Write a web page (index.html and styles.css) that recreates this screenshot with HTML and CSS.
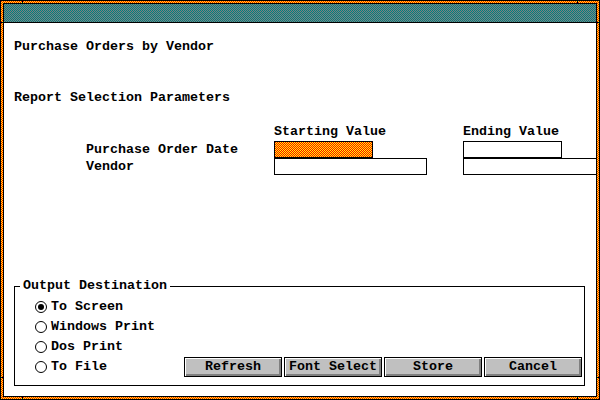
FILE: index.html
```html
<!DOCTYPE html>
<html>
<head>
<meta charset="utf-8">
<title>Purchase Orders by Vendor</title>
<link rel="stylesheet" href="styles.css">
</head>
<body>

<div class="window">
  <div class="client">
    <div class="titlebar"></div>

    <div class="body">
      <h1 class="caption">Purchase Orders by Vendor</h1>
      <h2 class="caption section">Report Selection Parameters</h2>

      <div class="params">
        <div></div>
        <div class="colhead">Starting Value</div>
        <div class="colhead">Ending Value</div>

        <div class="label">Purchase Order Date</div>
        <div><span class="field short hatched"></span></div>
        <div><span class="field short"></span></div>

        <div class="label">Vendor</div>
        <div><span class="field long"></span></div>
        <div><span class="field long"></span></div>
      </div>

      <fieldset class="group">
        <legend>Output Destination</legend>
        <div class="group-body">
          <div class="radios">
            <div class="radio-row"><span class="radio checked"></span>To Screen</div>
            <div class="radio-row"><span class="radio"></span>Windows Print</div>
            <div class="radio-row"><span class="radio"></span>Dos Print</div>
            <div class="radio-row"><span class="radio"></span>To File</div>
          </div>
          <div class="buttons">
            <button class="btn">Refresh</button>
            <button class="btn">Font Select</button>
            <button class="btn">Store</button>
            <button class="btn">Cancel</button>
          </div>
        </div>
      </fieldset>
    </div>
  </div>
</div>

</body>
</html>
```

FILE: styles.css
```css
html, body { margin: 0; padding: 0; background: #fff; }
body { font-family: "Liberation Mono", "DejaVu Sans Mono", monospace; font-weight: bold; font-size: 13.33px; line-height: 16px; color: #000; }

/* 1px dithers: base colour, screen with row stripes, difference with column stripes */

/* window sizing frame, red/yellow dither with corner notches */
.window { width: 600px; height: 400px; box-sizing: border-box; border: 1px solid #000; padding: 2px;
  background-color: #ff0000;
  background-image:
    linear-gradient(#000, #000), linear-gradient(#000, #000), linear-gradient(#000, #000), linear-gradient(#000, #000),
    linear-gradient(#000, #000), linear-gradient(#000, #000), linear-gradient(#000, #000), linear-gradient(#000, #000),
    linear-gradient(90deg, #00ff00 50%, #000 50%),
    linear-gradient(180deg, #00ff00 50%, #000 50%);
  background-size: 1px 2px, 1px 2px, 1px 2px, 1px 2px, 2px 1px, 2px 1px, 2px 1px, 2px 1px, 2px 2px, 2px 2px;
  background-position: 21px 0, 576px 0, 21px 396px, 576px 396px, 0 21px, 596px 21px, 0 376px, 596px 376px, 0 0, 0 0;
  background-repeat: no-repeat, no-repeat, no-repeat, no-repeat, no-repeat, no-repeat, no-repeat, no-repeat, repeat, repeat;
  background-blend-mode: normal, normal, normal, normal, normal, normal, normal, normal, difference, screen; }

.client { height: 100%; box-sizing: border-box; border: 1px solid #000; background: #fff; overflow: hidden; }

.titlebar { height: 18px; border-bottom: 1px solid #000;
  background-color: #008080;
  background-image: linear-gradient(90deg, #800000 50%, #000 50%), linear-gradient(180deg, #800000 50%, #000 50%);
  background-size: 2px 2px;
  background-blend-mode: difference, screen; }

.body { padding: 0 0 0 10px; }

.caption { font-size: 13.33px; font-weight: bold; line-height: 16px; margin: 16px 0 0; }
.section { margin-top: 35px; }

/* selection grid */
.params { display: grid; grid-template-columns: 188px 189px auto; grid-template-rows: 18px 17px 17px; margin: 17px 0 0 72px; }
.colhead { line-height: 16px; padding-top: 1px; }
.label { display: flex; align-items: center; }
.field { display: block; height: 17px; box-sizing: border-box; border: 1px solid #000; background: #fff; }
.field.short { width: 99px; }
.field.long { width: 153px; }
.field.hatched { background-color: #ff0000;
  background-image: linear-gradient(90deg, #00ff00 50%, #000 50%), linear-gradient(180deg, #00ff00 50%, #000 50%);
  background-size: 2px 2px;
  background-blend-mode: difference, screen; }

/* output destination group */
.group { width: 571px; box-sizing: border-box; margin: 103px 0 0; padding: 0; border: 1px solid #000; min-inline-size: 0; }
.group legend { margin-left: 5px; padding: 0 3px; line-height: 16px; }
.group-body { display: flex; justify-content: space-between; align-items: flex-end; padding: 3px 2px 8px 20px; }

.radio-row { height: 20px; display: flex; align-items: center; gap: 4px; }
.radio { width: 12px; height: 12px; box-sizing: border-box; border: 1px solid #000; border-radius: 50%; background: #fff;
  display: flex; align-items: center; justify-content: center; }
.radio.checked::after { content: ""; width: 6px; height: 6px; border-radius: 50%; background: #000; }

.buttons { display: flex; gap: 2px; }
.btn { width: 98px; height: 20px; margin: 0; padding: 0; border: 1px solid #000; background: #c0c0c0;
  box-shadow: inset 1px 1px #fff, inset -2px -2px #808080;
  font-family: "Liberation Mono", "DejaVu Sans Mono", monospace; font-weight: bold; font-size: 13.33px; line-height: 18px; color: #000; }
```
